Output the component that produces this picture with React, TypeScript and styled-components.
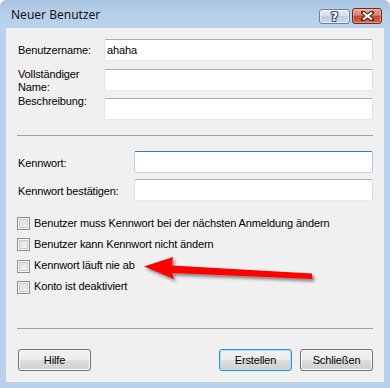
import React from "react";
import styled, { createGlobalStyle } from "styled-components";

const Global = createGlobalStyle`
  html, body { margin: 0; padding: 0; background: #ffffff; }
  body { font-family: "Liberation Sans", Arial, sans-serif; font-size: 11px; }
  * { box-sizing: border-box; }
`;

const Window = styled.div`
  width: 390px;
  height: 388px;
  border-radius: 6px 6px 0 0;
  background: linear-gradient(180deg, #a9c4e2 0px, #b7cfe8 14px, #bad2eb 28px, #b9d1ea 100%);
  display: flex;
  flex-direction: column;
  padding: 0 6px 6px 6px;
`;

const TitleBar = styled.div`
  height: 28px;
  display: flex;
  align-items: flex-start;
`;

const Title = styled.div`
  font-family: "Noto Sans", "Open Sans", sans-serif;
  font-size: 12px;
  line-height: 16px;
  color: #141414;
  margin: 7px 0 0 5px;
`;

const Caption = styled.div`
  margin: 8px 2px 0 auto;
  display: flex;
  gap: 2px;
`;

const CapButton = styled.div<{ $kind: "help" | "close" }>`
  width: ${(p) => (p.$kind === "help" ? 31 : 30)}px;
  height: ${(p) => (p.$kind === "help" ? 15 : 16)}px;
  margin-top: ${(p) => (p.$kind === "help" ? 1 : 0)}px;
  border-radius: 3px;
  border: 1px solid ${(p) => (p.$kind === "help" ? "#6f7f95" : "#6e2b22")};
  background: ${(p) =>
    p.$kind === "help"
      ? "linear-gradient(180deg, #e2ebf5 0%, #d2dfee 45%, #bccfe6 50%, #c9d9ec 100%)"
      : "linear-gradient(180deg, #e9a99b 0%, #dc7f6b 45%, #c8452f 50%, #d2674e 100%)"};
  box-shadow: inset 0 0 0 1px ${(p) => (p.$kind === "help" ? "rgba(255,255,255,0.55)" : "rgba(255,200,190,0.45)")};
  display: flex;
  align-items: center;
  justify-content: center;
`;

const HelpGlyph = styled.span`
  font-family: "DejaVu Sans", sans-serif;
  font-weight: bold;
  font-size: 12px;
  line-height: 12px;
  color: #ffffff;
  text-shadow: 1px 0 #46505e, -1px 0 #46505e, 0 1px #46505e, 0 -1px #46505e,
    1px 1px #46505e, -1px -1px #46505e, 1px -1px #46505e, -1px 1px #46505e;
`;

const Client = styled.div`
  flex: 1;
  position: relative;
  background: #f0f0f0;
  display: flex;
  flex-direction: column;
  padding: 0 11px 11px 11px;
  letter-spacing: -0.13px;
`;

const FieldGrid = styled.div<{ $labelWidth: number; $rows: string; $gap: number; $top: number }>`
  display: grid;
  grid-template-columns: ${(p) => p.$labelWidth}px 1fr;
  grid-template-rows: ${(p) => p.$rows};
  row-gap: ${(p) => p.$gap}px;
  margin-top: ${(p) => p.$top}px;
`;

const Label = styled.div<{ $offset: number }>`
  font-size: 11px;
  line-height: 13px;
  color: #000;
  padding-left: 1px;
  margin-top: ${(p) => p.$offset}px;
  align-self: start;
`;

const TextBox = styled.input<{ $focused?: boolean }>`
  height: 22px;
  width: 100%;
  align-self: start;
  margin: 0;
  padding: 0 2px;
  font-family: "Liberation Sans", Arial, sans-serif;
  font-size: 11px;
  letter-spacing: -0.13px;
  color: #000;
  background: #ffffff;
  outline: none;
  border-radius: 2px;
  border-style: solid;
  border-width: 1px;
  border-color: ${(p) =>
    p.$focused ? "#3d7bad #a4c9e3 #b7d9ed #b5cfe7" : "#abadb3 #dbdfe6 #e3e9ef #e2e3ea"};
`;

const Separator = styled.div<{ $top: number }>`
  height: 1px;
  background: #a0a0a0;
  margin-top: ${(p) => p.$top}px;
`;

const CheckList = styled.div`
  display: flex;
  flex-direction: column;
  gap: 8.33px;
  margin-top: 16px;
`;

const CheckRow = styled.label`
  display: flex;
  align-items: center;
  gap: 4px;
  height: 13px;
`;

const Box = styled.span`
  width: 13px;
  height: 13px;
  flex: none;
  border: 1px solid #8e8f8f;
  background: linear-gradient(135deg, #d3d5d8 0%, #eaeaea 55%, #f9f9f9 100%);
  box-shadow: inset 0 0 0 1px #f6f6f6, inset 0 0 0 2px #c9cbcf;
`;

const CheckText = styled.span`
  font-size: 11px;
  line-height: 13px;
  color: #000;
  margin-top: -1px;
`;

const Footer = styled.div`
  margin-top: auto;
  display: flex;
  flex-direction: column;
`;

const ButtonRow = styled.div`
  display: flex;
  align-items: center;
  gap: 8px;
  margin-top: 20px;
  padding-left: 1px;
`;

const Spacer = styled.div`
  flex: 1;
`;

const PushButton = styled.button<{ $default?: boolean }>`
  width: 73px;
  height: 22px;
  margin: 0;
  padding: 0;
  font-family: "Liberation Sans", Arial, sans-serif;
  font-size: 11px;
  letter-spacing: -0.13px;
  color: #000;
  border-radius: 3px;
  border: 1px solid ${(p) => (p.$default ? "#3c8ccc" : "#707070")};
  background: linear-gradient(180deg, #f2f2f2 0%, #ebebeb 48%, #dddddd 52%, #cfcfcf 100%);
  box-shadow: inset 0 0 0 1px ${(p) => (p.$default ? "#a8e4fb" : "#fbfbfb")};
`;

const ArrowLayer = styled.svg`
  position: absolute;
  left: 0;
  top: 0;
  width: 100%;
  height: 100%;
  pointer-events: none;
`;

const checks = [
  "Benutzer muss Kennwort bei der nächsten Anmeldung ändern",
  "Benutzer kann Kennwort nicht ändern",
  "Kennwort läuft nie ab",
  "Konto ist deaktiviert",
];

export default function App() {
  return (
    <>
      <Global />
      <Window>
        <TitleBar>
          <Title>Neuer Benutzer</Title>
          <Caption>
            <CapButton $kind="help">
              <HelpGlyph>?</HelpGlyph>
            </CapButton>
            <CapButton $kind="close">
              <svg width="13" height="10" viewBox="0 0 13 10">
                <path d="M2 1.5 L11 8.5 M11 1.5 L2 8.5" stroke="#4a1f1a" strokeWidth="4" strokeLinecap="square" />
                <path d="M2 1.5 L11 8.5 M11 1.5 L2 8.5" stroke="#ffffff" strokeWidth="2.2" strokeLinecap="butt" />
              </svg>
            </CapButton>
          </Caption>
        </TitleBar>
        <Client>
          <FieldGrid $labelWidth={87} $rows="23px 22px 22px" $gap={7} $top={11}>
            <Label $offset={5}>Benutzername:</Label>
            <TextBox readOnly value="ahaha" />
            <Label $offset={-1}>
              Vollständiger
              <br />
              Name:
            </Label>
            <TextBox readOnly value="" />
            <Label $offset={-3}>Beschreibung:</Label>
            <TextBox readOnly value="" />
          </FieldGrid>
          <Separator $top={15} />
          <FieldGrid $labelWidth={117} $rows="22px 22px" $gap={6} $top={15}>
            <Label $offset={6}>Kennwort:</Label>
            <TextBox readOnly value="" $focused />
            <Label $offset={6}>Kennwort bestätigen:</Label>
            <TextBox readOnly value="" />
          </FieldGrid>
          <CheckList>
            {checks.map((c) => (
              <CheckRow key={c}>
                <Box />
                <CheckText>{c}</CheckText>
              </CheckRow>
            ))}
          </CheckList>
          <Footer>
            <Separator $top={0} />
            <ButtonRow>
              <PushButton>Hilfe</PushButton>
              <Spacer />
              <PushButton $default>Erstellen</PushButton>
              <PushButton>Schließen</PushButton>
            </ButtonRow>
          </Footer>
          <ArrowLayer viewBox="6 28 378 354" preserveAspectRatio="none">
            <defs>
              <filter id="arrowShadow" x="-10%" y="-30%" width="130%" height="180%">
                <feDropShadow dx="2" dy="2.5" stdDeviation="1.4" floodColor="#000" floodOpacity="0.45" />
              </filter>
            </defs>
            <polygon
              points="144,266.5 173,257 172,265.5 312,273.5 312.5,279 172,273 174,279"
              fill="#ff0000"
              filter="url(#arrowShadow)"
            />
          </ArrowLayer>
        </Client>
      </Window>
    </>
  );
}
